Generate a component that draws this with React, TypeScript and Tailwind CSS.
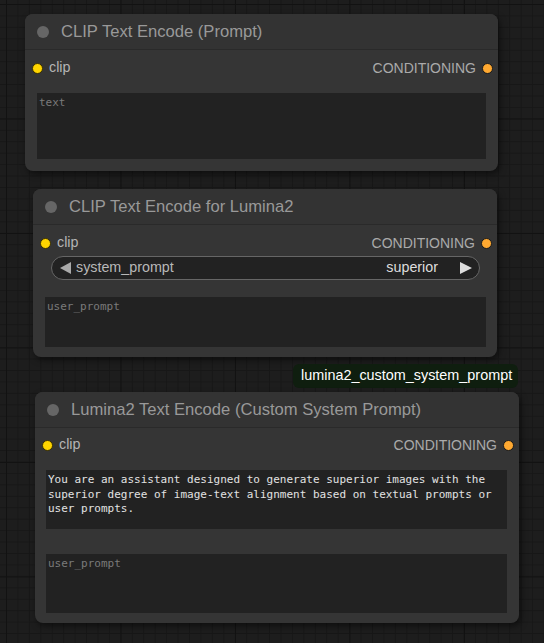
const sans = "font-['Liberation_Sans',Arial,sans-serif]";
const mono = "font-['DejaVu_Sans_Mono','Liberation_Mono',monospace]";

function TitleBar({ title }: { title: string }) {
  return (
    <div className="flex h-9 shrink-0 items-center gap-[13px] rounded-t-lg border-b border-[#2a2a2a] bg-[#333333] pl-3">
      <span className="h-3 w-3 rounded-full bg-[#666666]" />
      <span className="-ml-[1px] pt-[2px] text-[16.6px] text-[#999999]">{title}</span>
    </div>
  );
}

function SlotRow() {
  return (
    <div className="flex h-5 items-center justify-between pl-[7px] pr-[5px]">
      <div className="flex items-center gap-[6px]">
        <span className="h-[11px] w-[11px] rounded-full border border-[#3a3000] bg-[#ffd500]" />
        <span className="text-[14.3px] text-[#b4b4b4]">clip</span>
      </div>
      <div className="flex items-center gap-[6px]">
        <span className="text-sm text-[#aaaaaa]">CONDITIONING</span>
        <span className="h-[11px] w-[11px] rounded-full border border-[#1a1a1a] bg-[#ffa931]" />
      </div>
    </div>
  );
}

function TextBox({ text, placeholder, className }: { text?: string; placeholder?: string; className: string }) {
  return (
    <div className={`bg-[#222222] px-[2px] pt-[3px] text-[11px] leading-[14.5px] ${mono} ${className}`}>
      {text ? (
        <span className="text-[#e2e2e2]">{text}</span>
      ) : (
        <span className="text-[#7a7a7a]">{placeholder}</span>
      )}
    </div>
  );
}

export default function App() {
  return (
    <div
      className={`relative h-[643px] w-[544px] overflow-hidden bg-[#1d1d1d] ${sans} [background-image:linear-gradient(to_right,#121212_1px,transparent_1px),linear-gradient(to_bottom,#121212_1px,transparent_1px),linear-gradient(to_right,#171717_1px,transparent_1px),linear-gradient(to_bottom,#171717_1px,transparent_1px)] [background-size:114.5px_114.5px,114.5px_114.5px,11.45px_11.45px,11.45px_11.45px] [background-position:6px_4px]`}
    >
      {/* CLIP Text Encode (Prompt) */}
      <div className="absolute left-[25px] top-[14px] flex h-[157px] w-[473px] flex-col rounded-lg bg-[#353535] shadow-[2px_3px_6px_rgba(0,0,0,0.5)]">
        <TitleBar title="CLIP Text Encode (Prompt)" />
        <div className="mt-[8px]">
          <SlotRow />
        </div>
        <div className="px-3 pt-[15px]">
          <TextBox placeholder="text" className="h-[66px]" />
        </div>
      </div>

      {/* CLIP Text Encode for Lumina2 */}
      <div className="absolute left-[33px] top-[189px] flex h-[168px] w-[464px] flex-col rounded-lg bg-[#353535] shadow-[2px_3px_6px_rgba(0,0,0,0.5)]">
        <TitleBar title="CLIP Text Encode for Lumina2" />
        <div className="mt-[8px]">
          <SlotRow />
        </div>
        <div className="ml-[18px] mr-[17px] mt-[3px] flex h-6 items-center rounded-full border border-[#666666] bg-[#222222] pl-[8px] pr-[7px] text-[14.3px]">
          <svg width="11" height="12" viewBox="0 0 11 12" className="shrink-0">
            <path d="M0 6 L11 0 L11 12 Z" fill="#aaaaaa" />
          </svg>
          <span className="ml-[5px] text-[#b8b8b8]">system_prompt</span>
          <span className="ml-auto text-[#dddddd]">superior</span>
          <svg width="12" height="12" viewBox="0 0 12 12" className="ml-[22px] shrink-0">
            <path d="M12 6 L0 0 L0 12 Z" fill="#dddddd" />
          </svg>
        </div>
        <div className="pl-3 pr-[11px] pt-[17px]">
          <TextBox placeholder="user_prompt" className="h-[50px]" />
        </div>
      </div>

      {/* group label */}
      <div className="absolute left-[293px] top-[364px] flex h-6 w-[225px] items-center rounded-md bg-[#0f1e0f] pl-2 text-[14.4px] text-white">
        lumina2_custom_system_prompt
      </div>

      {/* Lumina2 Text Encode (Custom System Prompt) */}
      <div className="absolute left-[35px] top-[392px] flex h-[231px] w-[484px] flex-col rounded-lg bg-[#353535] shadow-[2px_3px_6px_rgba(0,0,0,0.5)]">
        <TitleBar title="Lumina2 Text Encode (Custom System Prompt)" />
        <div className="mt-[7px]">
          <SlotRow />
        </div>
        <div className="flex flex-col gap-[25px] pl-[11px] pr-3 pt-[15px]">
          <TextBox
            text="You are an assistant designed to generate superior images with the superior degree of image-text alignment based on textual prompts or user prompts."
            className="h-[59px]"
          />
          <TextBox placeholder="user_prompt" className="h-[59px]" />
        </div>
      </div>
    </div>
  );
}
